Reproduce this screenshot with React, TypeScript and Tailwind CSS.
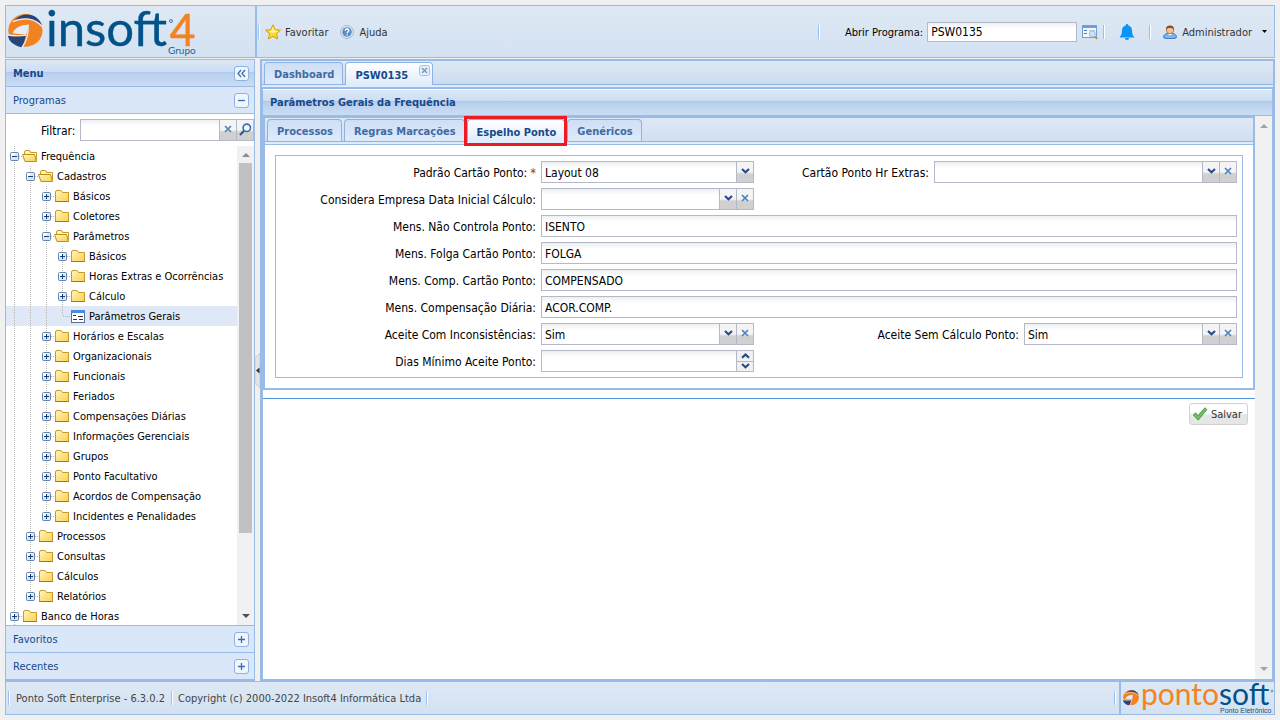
import React, { useState } from 'react';

interface TreeNode {
  label: string;
  depth: number;
  kind: 'open' | 'closed' | 'leaf';
  last?: boolean;
}

const tree: TreeNode[] = [
  { label: 'Frequência', depth: 0, kind: 'open' },
  { label: 'Cadastros', depth: 1, kind: 'open' },
  { label: 'Básicos', depth: 2, kind: 'closed' },
  { label: 'Coletores', depth: 2, kind: 'closed' },
  { label: 'Parâmetros', depth: 2, kind: 'open' },
  { label: 'Básicos', depth: 3, kind: 'closed' },
  { label: 'Horas Extras e Ocorrências', depth: 3, kind: 'closed' },
  { label: 'Cálculo', depth: 3, kind: 'closed' },
  { label: 'Parâmetros Gerais', depth: 3, kind: 'leaf', last: true },
  { label: 'Horários e Escalas', depth: 2, kind: 'closed' },
  { label: 'Organizacionais', depth: 2, kind: 'closed' },
  { label: 'Funcionais', depth: 2, kind: 'closed' },
  { label: 'Feriados', depth: 2, kind: 'closed' },
  { label: 'Compensações Diárias', depth: 2, kind: 'closed' },
  { label: 'Informações Gerenciais', depth: 2, kind: 'closed' },
  { label: 'Grupos', depth: 2, kind: 'closed' },
  { label: 'Ponto Facultativo', depth: 2, kind: 'closed' },
  { label: 'Acordos de Compensação', depth: 2, kind: 'closed' },
  { label: 'Incidentes e Penalidades', depth: 2, kind: 'closed', last: true },
  { label: 'Processos', depth: 1, kind: 'closed' },
  { label: 'Consultas', depth: 1, kind: 'closed' },
  { label: 'Cálculos', depth: 1, kind: 'closed' },
  { label: 'Relatórios', depth: 1, kind: 'closed', last: true },
  { label: 'Banco de Horas', depth: 0, kind: 'closed' },
];

/* ---------- Icons ---------- */

const Ball = () => (
  <>
    <ellipse cx="52" cy="49" rx="51" ry="49" fill="#f58220" />
    <path d="M20 18C42 -7 88 -6 103 36C80 12 50 9 20 18Z" fill="#24467c" />
    <path d="M14 23C46 9 80 12 105 40" fill="none" stroke="#e3ecf7" strokeWidth="4" />
    <path d="M14 57C20 42 38 32 60 32C60 44 58 54 54 62C40 60 28 61 14 57Z" fill="#e3ecf7" />
    <path d="M0 64C18 69 36 67 52 66C50 80 46 92 40 99C18 94 2 82 0 64Z" fill="#24467c" />
    <path d="M60 31C62 58 54 84 42 100M0 62C18 67 36 65 54 63" fill="none" stroke="#e3ecf7" strokeWidth="4" />
  </>
);

const Star = () => (
  <svg width="16" height="16" viewBox="0 0 16 16">
    <path d="M8 .8L10.2 5.6L15.4 6.2L11.5 9.7L12.6 15L8 12.3L3.4 15L4.5 9.7L.6 6.2L5.8 5.6Z" fill="#fbdc2e" stroke="#d99a12" strokeLinejoin="round" />
    <path d="M8 2.4L9.4 6.6L13.4 7L9 9L4 8L6.6 6.6Z" fill="#fff4a0" />
  </svg>
);

const Help = () => (
  <svg width="14" height="14" viewBox="0 0 14 14">
    <circle cx="7" cy="7" r="6.4" fill="#e6eef8" stroke="#9fb3cd" />
    <circle cx="7" cy="7" r="4.8" fill="#5f8dc9" />
    <path d="M5.2 5.6C5.3 3.4 8.8 3.5 8.8 5.5C8.8 6.8 7.1 6.8 7.1 8.2" fill="none" stroke="#fff" strokeWidth="1.3" />
    <circle cx="7.1" cy="10" r=".8" fill="#fff" />
  </svg>
);

const FormSearch = () => (
  <svg width="16" height="16" viewBox="0 0 16 16">
    <rect x=".5" y="1.5" width="14" height="12" fill="#f4f8fd" stroke="#6f9fd8" />
    <path d="M0 1H15V4H0Z" fill="#6f9fd8" />
    <path d="M2 6.5H5M2 9.5H5" stroke="#4a7fc4" />
    <path d="M7 6.5H13M7 9.5H9" stroke="#b9c8da" />
    <circle cx="10.3" cy="9.8" r="3" fill="#cfe2f6" stroke="#9db9d9" />
    <path d="M12.8 12.3L15.2 15" stroke="#c08a4a" strokeWidth="1.8" />
  </svg>
);

const Bell = () => (
  <svg width="16" height="16" viewBox="0 0 16 16">
    <path d="M8 0C8.9 0 9.3 .6 9.3 1.4C11.8 2 13 4 13 6.5C13 10 13.8 11.6 15.5 13.4H.5C2.2 11.6 3 10 3 6.5C3 4 4.2 2 6.7 1.4C6.7 .6 7.1 0 8 0ZM5.8 14H10.2C10 15.2 9.2 16 8 16C6.8 16 6 15.2 5.8 14Z" fill="#0d93f7" />
  </svg>
);

const User = () => (
  <svg width="14" height="14" viewBox="0 0 14 14">
    <path d="M.6 12.2C.6 9.4 3 8.2 7 8.2C11 8.2 13.4 9.4 13.4 12.2C13.4 13.2 12 13.6 7 13.6C2 13.6 .6 13.2 .6 12.2Z" fill="#7db4ee" stroke="#2f66b8" strokeWidth=".9" />
    <path d="M4.6 8.4L7 10.6L9.4 8.4Z" fill="#fff" />
    <circle cx="7" cy="5" r="3.7" fill="#f3c493" stroke="#9a5b22" strokeWidth=".7" />
    <path d="M3 4.8C2.8 1.8 4.4 .4 7 .4C9.6 .4 11.2 1.8 11 4.8C9.8 3.4 8.6 3 7 3C5.4 3 4.2 3.4 3 4.8Z" fill="#8a4d1c" />
  </svg>
);

const Magnifier = () => (
  <svg width="13" height="13" viewBox="0 0 13 13">
    <circle cx="7.8" cy="4.8" r="3.7" fill="#f2f7fc" stroke="#3a6fae" strokeWidth="1.6" />
    <path d="M5 7.8L1 12" stroke="#2d5c98" strokeWidth="2.2" />
  </svg>
);

const Cross = () => (
  <svg width="8" height="8" viewBox="0 0 8 8">
    <path d="M1 1L7 7M7 1L1 7" stroke="#4a84bd" strokeWidth="1.7" />
  </svg>
);

const Chevron = ({ up }: { up?: boolean }) => (
  <svg width="9" height="6" viewBox="0 0 9 6">
    <path d={up ? 'M1 4.8L4.5 1.6L8 4.8' : 'M1 1L4.5 4.2L8 1'} fill="none" stroke="#2a4a8c" strokeWidth="2.2" />
  </svg>
);

const CheckMark = () => (
  <svg width="16" height="16" viewBox="0 0 16 16">
    <path d="M1.2 9L3.6 6.8L6 9.6L12.8 1.8L15 3.6L6.2 14.2Z" fill="#6cc15f" stroke="#3f9440" strokeWidth=".8" />
  </svg>
);

const Caret = ({ up, className }: { up?: boolean; className: string }) => (
  <svg width="8" height="4" viewBox="0 0 8 4" className={className}>
    <path d={up ? 'M0 4L4 0L8 4Z' : 'M0 0H8L4 4Z'} />
  </svg>
);

const Folder = ({ open }: { open: boolean }) => (
  <svg width="16" height="16" viewBox="0 0 16 16">
    <linearGradient id="folder" x1="0" y1="0" x2="1" y2="1">
      <stop offset="0" stopColor="#fff6bf" />
      <stop offset="1" stopColor="#fbcf4e" />
    </linearGradient>
    {open ? (
      <>
        <path d="M2.5 12V4Q2.5 2.5 4 2.5H7Q8.5 2.5 8.5 4.5H14.5V13" fill="#fff3b8" stroke="#c79a2b" />
        <path d="M.5 6.5H12.5L14.5 13.5H3Z" fill="url(#folder)" stroke="#c0901f" />
      </>
    ) : (
      <>
        <path d="M1.5 13.5V4Q1.5 2.5 3 2.5H6.5Q8 2.5 8.5 4.5H14.5V13.5Z" fill="url(#folder)" stroke="#c79a2b" />
        <path d="M1 13.5H15" stroke="#a87a14" />
      </>
    )}
  </svg>
);

const FormIcon = () => (
  <svg width="16" height="16" viewBox="0 0 16 16">
    <rect x="1.5" y="2.5" width="13" height="12" fill="#fff" stroke="#5a6f8f" />
    <path d="M1 2H15V5H1Z" fill="#4a8ae0" />
    <path d="M3 7.5H6M8 8.5H13M3 11.5H7M9 11.5H13" stroke="#333" />
  </svg>
);

const Elbow = ({ node }: { node: TreeNode }) => (
  <svg width="16" height="20" viewBox="0 0 16 20">
    <path d={node.last ? 'M8.5 0V10' : 'M8.5 0V20'} stroke="#b5b5b5" strokeDasharray="1 1" />
    <path d="M9 10.5H16" stroke="#b5b5b5" strokeDasharray="1 1" />
    {node.kind !== 'leaf' && (
      <>
        <rect x="4.5" y="6.5" width="8" height="8" rx="1" fill="#dce6f3" stroke="#6883a8" />
        <path d="M5 7H10L5 12Z" fill="#fff" />
        <path d={node.kind === 'open' ? 'M6 10.5H11' : 'M6 10.5H11M8.5 8V13'} stroke="#1c3f78" />
      </>
    )}
  </svg>
);

/* ---------- Small pieces ---------- */

const Separator = () => <span className="h-[14px] w-[2px] border-r border-white bg-[#98c0f4]" />;

const ToolButton = ({ label, path }: { label: string; path: string }) => (
  <button aria-label={label} className="flex h-[15px] w-[15px] items-center justify-center rounded-[3px] border border-[#8db2e3] bg-[#f0f6fd]">
    <svg width="11" height="11" viewBox="0 0 11 11">
      <path d={path} fill="none" stroke="#3d6eaa" strokeWidth="1.3" />
    </svg>
  </button>
);

const PLUS = 'M2 5.5H9M5.5 2V9';
const MINUS = 'M2 5.5H9';
const COLLAPSE = 'M5 2L2 5.5L5 9M9 2L6 5.5L9 9';

const AccordionHeader = ({ title, open }: { title: string; open?: boolean }) => (
  <div className="flex h-[27px] shrink-0 items-center justify-between border-b border-[#99bbe8] bg-[#d9e7f8] pl-[7px] pr-[5px] text-[#15498b]">
    <span className="pt-[2px]">{title}</span>
    <ToolButton label={title} path={open ? MINUS : PLUS} />
  </div>
);

const Trigger = ({ label, children }: { label: string; children: React.ReactNode }) => (
  <button aria-label={label} className="flex w-[17px] shrink-0 items-center justify-center border-l border-[#b5b8c8] bg-linear-to-b from-[#f4f4f4] from-50% to-[#d0d0d0] to-60% pb-[2px]">
    {children}
  </button>
);

const fieldBox = 'flex h-[22px] min-w-0 flex-1 border border-[#b5b8c8] bg-linear-to-b from-[#eceff0] to-white to-30%';
const fieldText = 'min-w-0 flex-1 appearance-none bg-transparent px-[3px] pt-px outline-none';

interface FieldProps {
  id: string;
  label: string;
  labelClass: string;
  value?: string;
  type?: 'text' | 'combo' | 'spin';
  required?: boolean;
  clearable?: boolean;
  className?: string;
}

const Field = ({ id, label, labelClass, value = '', type = 'text', required, clearable, className = '' }: FieldProps) => (
  <div className={`flex items-center gap-[5px] ${className}`}>
    <label htmlFor={id} className={`shrink-0 whitespace-nowrap pt-[2px] text-right ${labelClass}`}>
      {label}:{required && <span className="text-[#a02818]"> *</span>}
    </label>
    <div className={fieldBox}>
      {type === 'combo' ? (
        <select id={id} defaultValue={value} className={fieldText}>
          <option value={value}>{value}</option>
        </select>
      ) : (
        <input id={id} defaultValue={value} className={fieldText} />
      )}
      {type === 'combo' && (
        <Trigger label={`Abrir ${label}`}>
          <Chevron />
        </Trigger>
      )}
      {clearable && (
        <Trigger label={`Limpar ${label}`}>
          <Cross />
        </Trigger>
      )}
      {type === 'spin' && (
        <div className="flex w-[17px] flex-col divide-y divide-[#b5b8c8] border-l border-[#b5b8c8] bg-[#f0f0f0]">
          <button aria-label="Aumentar" className="flex flex-1 items-center justify-center"><Chevron up /></button>
          <button aria-label="Diminuir" className="flex flex-1 items-center justify-center"><Chevron /></button>
        </div>
      )}
    </div>
  </div>
);

interface TabProps {
  title: string;
  active: boolean;
  onClick?: () => void;
  highlighted?: boolean;
  closable?: boolean;
}

const Tab = ({ title, active, onClick, highlighted, closable }: TabProps) => (
  <button
    role="tab"
    aria-selected={active}
    onClick={onClick}
    className={`relative whitespace-nowrap rounded-t-[4px] border border-b-0 border-[#8db2e3] pl-[9px] pt-[3px] font-bold ${closable ? 'pr-[24px]' : 'pr-[8px]'} ${
      active
        ? '-mb-px h-[23px] bg-linear-to-b from-white to-[#deecfd] text-[#15498b]'
        : 'h-[22px] bg-linear-to-b from-[#cedff5] to-[#deebfa] text-[#416aa3]'
    }`}
  >
    {title}
    {closable && (
      <svg width="11" height="11" viewBox="0 0 11 11" className="absolute right-[2px] top-[2px]">
        <rect x=".5" y=".5" width="10" height="10" rx="2" fill="#e4effc" stroke="#a3c0e4" />
        <path d="M3 3L8 8M8 3L3 8" stroke="#7f9dc2" strokeWidth="1.6" />
      </svg>
    )}
    {highlighted && <span className="pointer-events-none absolute -bottom-[4px] -left-[4px] -right-[3px] -top-[4px] z-10 border-3 border-[#ed1c24]" />}
  </button>
);

const panelTitle =
  'bg-[linear-gradient(to_bottom,#dae7f6,#cddef3_45%,#abc7ec_46%,#b8cfee_51%,#cbddf3)] font-bold text-[#15498b]';
const barGradient = 'bg-linear-to-b from-[#dfe9f5] to-[#d3e1f1]';

/* ---------- Sections ---------- */

const Header = () => (
  <header className="flex h-[53px] shrink-0">
    <div className={`w-[250px] shrink-0 border border-r-0 border-[#99bbe8] ${barGradient}`}>
      <svg width="200" height="51" viewBox="0 0 200 51" className="overflow-visible" role="img" aria-label="Insoft4 Grupo">
        <g transform="translate(2 8) scale(.335)">
          <Ball />
        </g>
        <g className="font-['Lato',sans-serif]">
          <text x="40" y="40" fontSize="49" fill="#005288" stroke="#005288" strokeWidth=".4">insoft</text>
          <text x="164" y="40" fontSize="44" fill="#f58220" stroke="#f58220" strokeWidth=".6">4</text>
          <circle cx="165" cy="15" r="1.5" fill="none" stroke="#005288" strokeWidth=".7" />
          <text x="162" y="48" fontSize="10" fill="#1d6596">Grupo</text>
        </g>
      </svg>
    </div>
    <div className={`flex flex-1 items-center border border-l-2 border-[#99bbe8] pl-[1px] pr-[7px] text-[#333] ${barGradient}`}>
      <Separator />
      <button className="ml-[5px] flex items-center gap-[4px]">
        <Star />
        <span className="pt-[2px]">Favoritar</span>
      </button>
      <button className="ml-[12px] flex items-center gap-[5px]">
        <Help />
        <span className="pt-[2px]">Ajuda</span>
      </button>
      <div className="ml-auto flex items-center">
        <Separator />
        <label htmlFor="programa" className="ml-[25px] pt-[2px] text-black">Abrir Programa:</label>
        <input
          id="programa"
          defaultValue="PSW0135"
          className="ml-[4px] h-[20px] w-[150px] border border-[#b5b8c8] bg-linear-to-b from-[#eceff0] to-white to-30% px-[3px] pt-px text-[12px] text-black outline-none"
        />
        <button aria-label="Pesquisar programa" className="ml-[5px] mr-[5px]">
          <FormSearch />
        </button>
        <Separator />
        <button aria-label="Notificações" className="mx-[14px]">
          <Bell />
        </button>
        <Separator />
        <button className="ml-[12px] flex items-center gap-[5px]">
          <User />
          <span className="pt-[2px]">Administrador</span>
          <svg width="5" height="3" viewBox="0 0 5 3" className="ml-[5px]">
            <path d="M0 0H5L2.5 3Z" />
          </svg>
        </button>
      </div>
    </div>
  </header>
);

const Sidebar = () => (
  <aside className="flex w-[250px] shrink-0 flex-col border border-[#99bbe8] bg-white">
    <div className={`flex h-[27px] shrink-0 items-center justify-between border-b border-[#99bbe8] pl-[7px] pr-[5px] ${panelTitle}`}>
      <h2 className="pt-[2px]">Menu</h2>
      <ToolButton label="Recolher menu" path={COLLAPSE} />
    </div>
    <AccordionHeader title="Programas" open />
    <div className="flex h-[32px] shrink-0 items-center gap-[5px] pl-[35px] text-[12px]">
      <label htmlFor="filtrar" className="pt-[2px]">Filtrar:</label>
      <div className={fieldBox}>
        <input id="filtrar" className={fieldText} />
        <Trigger label="Limpar filtro">
          <Cross />
        </Trigger>
        <Trigger label="Filtrar">
          <Magnifier />
        </Trigger>
      </div>
    </div>
    <div className="flex min-h-0 flex-1">
      <ul className="min-w-0 flex-1 overflow-hidden">
        {tree.map((node, i) => (
          <li key={i} className={`flex h-[20px] items-center whitespace-nowrap ${node.kind === 'leaf' ? 'bg-[#dfe8f6]' : ''}`}>
            {Array.from({ length: node.depth }, (_, d) => (
              <svg key={d} width="16" height="20" viewBox="0 0 16 20">
                <path d="M8.5 0V20" stroke="#b5b5b5" strokeDasharray="1 1" />
              </svg>
            ))}
            <Elbow node={node} />
            {node.kind === 'leaf' ? <FormIcon /> : <Folder open={node.kind === 'open'} />}
            <span className="ml-[3px] pt-[2px]">{node.label}</span>
          </li>
        ))}
      </ul>
      <div className="flex w-[17px] shrink-0 flex-col items-center bg-[#f1f1f1] pb-[7px] pt-[7px]">
        <Caret up className="fill-[#8b8b8b]" />
        <div className="mt-[6px] h-[370px] w-[13px] bg-[#c1c1c1]" />
        <Caret className="mt-auto fill-[#505050]" />
      </div>
    </div>
    <div className="border-t border-[#99bbe8]">
      <AccordionHeader title="Favoritos" />
      <AccordionHeader title="Recentes" />
    </div>
  </aside>
);

const ParametersForm = () => (
  <fieldset className="m-[10px] grid grid-cols-2 gap-y-[5px] border border-[#99bbe8] p-[5px] text-[12px]">
    <Field id="padrao" label="Padrão Cartão Ponto" labelClass="w-[255px]" value="Layout 08" type="combo" required className="pr-[5px]" />
    <Field id="extras" label="Cartão Ponto Hr Extras" labelClass="w-[170px]" type="combo" clearable />
    <Field id="empresa" label="Considera Empresa Data Inicial Cálculo" labelClass="w-[255px]" type="combo" clearable className="col-start-1 pr-[5px]" />
    <Field id="controla" label="Mens. Não Controla Ponto" labelClass="w-[255px]" value="ISENTO" className="col-span-2" />
    <Field id="folga" label="Mens. Folga Cartão Ponto" labelClass="w-[255px]" value="FOLGA" className="col-span-2" />
    <Field id="comp" label="Mens. Comp. Cartão Ponto" labelClass="w-[255px]" value="COMPENSADO" className="col-span-2" />
    <Field id="diaria" label="Mens. Compensação Diária" labelClass="w-[255px]" value="ACOR.COMP." className="col-span-2" />
    <Field id="inconsistencias" label="Aceite Com Inconsistências" labelClass="w-[255px]" value="Sim" type="combo" clearable className="pr-[5px]" />
    <Field id="calculo" label="Aceite Sem Cálculo Ponto" labelClass="w-[260px]" value="Sim" type="combo" clearable />
    <Field id="dias" label="Dias Mínimo Aceite Ponto" labelClass="w-[255px]" type="spin" className="pr-[5px]" />
  </fieldset>
);

const tabs = ['Processos', 'Regras Marcações', 'Espelho Ponto', 'Genéricos'];

const Workspace = () => {
  const [activeTab, setActiveTab] = useState('Espelho Ponto');

  return (
    <main className="flex min-w-0 flex-1 flex-col border-2 border-[#99bbe8] bg-white">
      <div role="tablist" className="flex h-[24px] shrink-0 items-end gap-[2px] border-b border-[#8db2e3] bg-linear-to-b from-[#dfe9f5] to-[#cbdbef] pl-[2px]">
        <Tab title="Dashboard" active={false} />
        <Tab title="PSW0135" active closable />
      </div>
      <div className="h-[2px] shrink-0 bg-[#deecfd]" />
      <div className="flex min-h-0 flex-1 flex-col border border-t-2 border-b-0 border-[#99bbe8]">
        <h1 className={`flex h-[27px] shrink-0 items-center border-b border-t border-b-[#99bbe8] border-t-white pl-[7px] ${panelTitle}`}>
          Parâmetros Gerais da Frequência
        </h1>
        <div className="flex min-h-0 flex-1">
          <div className="min-w-0 flex-1">
            <section className="border-2 border-[#99bbe8]">
              <div role="tablist" className="flex h-[24px] items-end gap-[2px] border-b border-[#8db2e3] bg-linear-to-b from-[#dfe9f5] to-[#cfdff1] pl-[2px]">
                {tabs.map((title) => (
                  <Tab
                    key={title}
                    title={title}
                    active={title === activeTab}
                    highlighted={title === 'Espelho Ponto'}
                    onClick={() => setActiveTab(title)}
                  />
                ))}
              </div>
              <div className="h-[3px] border-b border-[#99bbe8] bg-[#deecfd]" />
              <ParametersForm />
            </section>
            <div className="mt-[8px] flex justify-end border-t border-[#4f94e0] pr-[7px] pt-[4px]">
              <button className="flex h-[22px] items-center gap-[3px] rounded-[3px] border border-[#d1d1d1] bg-linear-to-b from-white from-45% to-[#e6e6e6] to-55% pl-[2px] pr-[5px] text-[#333]">
                <CheckMark />
                <span className="pt-[2px]">Salvar</span>
              </button>
            </div>
          </div>
          <div className="flex w-[17px] shrink-0 flex-col items-center justify-between bg-[#f1f1f1] py-[8px]">
            <Caret up className="fill-[#a3a3a3]" />
            <Caret className="fill-[#a3a3a3]" />
          </div>
        </div>
      </div>
    </main>
  );
};

const Footer = () => (
  <footer className={`flex h-[34px] shrink-0 items-center border border-[#99bbe8] pl-[2px] text-[#444] ${barGradient}`}>
    <Separator />
    <span className="mx-[6px] pt-[2px]">Ponto Soft Enterprise - 6.3.0.2</span>
    <Separator />
    <span className="mx-[5px] pt-[2px]">Copyright (c) 2000-2022 Insoft4 Informática Ltda</span>
    <Separator />
    <div className="ml-auto flex h-full items-center gap-[3px]">
      <Separator />
      <div className="h-full border-l-2 border-[#99bbe8]">
        <svg width="153" height="32" viewBox="0 0 153 32" className="overflow-visible" role="img" aria-label="Pontosoft Ponto Eletrônico">
          <g transform="translate(2 8) scale(.155)">
            <Ball />
          </g>
          <g className="font-['Lato',sans-serif]">
            <text x="20" y="23" fontSize="30" fill="#f58220">
              ponto<tspan fill="#005288">soft</tspan>
            </text>
            <circle cx="151" cy="9" r="1" fill="none" stroke="#005288" strokeWidth=".5" />
          </g>
          <text x="99" y="31" fontSize="7" fill="#1d4f7c" className="font-['Liberation_Sans',sans-serif]">Ponto Eletrônico</text>
        </svg>
      </div>
    </div>
  </footer>
);

export default function App() {
  return (
    <div className="flex h-screen min-h-[640px] flex-col bg-[#f0f0f0] p-[5px] font-['DejaVu_Sans_Condensed','Noto_Sans',sans-serif] text-[11px] leading-[14px] text-black">
      <Header />
      <div className="mt-px flex min-h-0 flex-1">
        <Sidebar />
        <div className="flex w-[5px] shrink-0 items-center">
          <button aria-label="Recolher" className="h-[35px] w-[5px]">
            <svg width="5" height="35" viewBox="0 0 5 35">
              <path d="M5 0L0 5V30L5 35Z" fill="#e4e4e4" stroke="#cfcfcf" />
              <path d="M4.5 14.5V20.5L1 17.5Z" fill="#333" />
            </svg>
          </button>
        </div>
        <Workspace />
      </div>
      <Footer />
    </div>
  );
}
